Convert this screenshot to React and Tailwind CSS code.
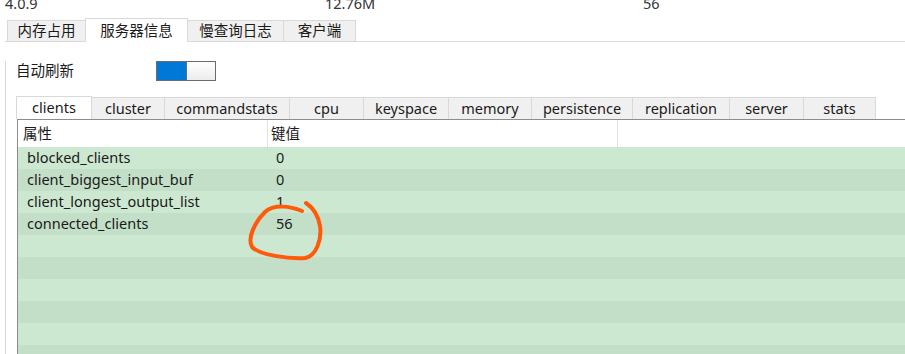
import React from 'react';

const outerTabs = [
  { label: '内存占用', w: 'w-[79px]' },
  { label: '服务器信息', w: 'w-[103px]', active: true },
  { label: '慢查询日志', w: 'w-[96px]' },
  { label: '客户端', w: 'w-[72px]' },
];

const innerTabs = [
  { label: 'clients', w: 'w-[76px]', active: true },
  { label: 'cluster', w: 'w-[73px]' },
  { label: 'commandstats', w: 'w-[125px]' },
  { label: 'cpu', w: 'w-[74px]' },
  { label: 'keyspace', w: 'w-[85px]' },
  { label: 'memory', w: 'w-[83px]' },
  { label: 'persistence', w: 'w-[101px]' },
  { label: 'replication', w: 'w-[97px]' },
  { label: 'server', w: 'w-[74px]' },
  { label: 'stats', w: 'w-[72px]' },
];

const rows = [
  ['blocked_clients', '0'],
  ['client_biggest_input_buf', '0'],
  ['client_longest_output_list', '1'],
  ['connected_clients', '56'],
  ['', ''], ['', ''], ['', ''], ['', ''], ['', ''], ['', ''],
];

export default function App() {
  return (
    <div className="relative w-[905px] h-[354px] overflow-hidden bg-white text-[14.5px] text-[#1a1a1a] font-['Noto_Sans','Noto_Sans_CJK_SC',sans-serif]">
      {/* top summary row, cut off by the window */}
      <div className="h-[18px] overflow-hidden">
        <div className="flex -mt-[7px] leading-[20px] text-[#333]">
          <span className="w-[325px] pl-[5px]">4.0.9</span>
          <span className="w-[318px]">12.76M</span>
          <span>56</span>
        </div>
      </div>

      {/* outer tabs */}
      <div className="ml-[5px] h-[24px] flex items-end pl-[2px] border-b border-[#d9d9d9]">
        {outerTabs.map((t, i) => (
          <div
            key={t.label}
            className={`${t.w} flex items-center justify-center border-t border-r border-[#d9d9d9] ${i === 0 ? 'border-l' : ''} ${t.active ? 'h-[24px] -mb-px bg-white border-l -ml-px relative' : 'h-[21px] bg-[#f0f0f0]'}`}
          >
            {t.label}
          </div>
        ))}
      </div>

      {/* panel */}
      <div className="ml-[5px] h-[312px] border-l border-[#d9d9d9] pl-[10px]">
        <div className="mt-[19px] flex items-center h-[20px]">
          <span className="w-[140px]">自动刷新</span>
          <div className="w-[60px] h-[20px] border border-[#6b6b6b] flex">
            <div className="w-[29px] bg-[#0078d7]" />
            <div className="flex-1 border-l border-[#6b6b6b] bg-gradient-to-b from-white to-[#ececec]" />
          </div>
        </div>

        {/* inner tabs */}
        <div className="mt-[15px] ml-px h-[23px] flex items-end">
          {innerTabs.map((t, i) => (
            <div
              key={t.label}
              className={`${t.w} flex items-center justify-center border-t border-r border-[#d9d9d9] ${i === 0 ? 'border-l' : ''} ${t.active ? 'h-[23px] bg-white -ml-px' : 'h-[22px] bg-[#f0f0f0]'}`}
            >
              {t.label}
            </div>
          ))}
        </div>

        {/* table */}
        <div className="ml-px border-l border-t border-[#8c8c8c]">
          <div className="h-[27px] flex items-center bg-white">
            <div className="w-[250px] h-full pl-[5px] flex items-center border-r border-[#e3e3e3]">属性</div>
            <div className="w-[350px] h-full pl-[3px] flex items-center border-r border-[#e3e3e3]">键值</div>
          </div>
          {rows.map((r, i) => (
            <div key={i} className={`h-[22px] flex items-center ${i % 2 === 0 ? 'bg-[#cde8d0]' : 'bg-[#c3dfc8]'}`}>
              <div className="w-[250px] pl-[9px]">{r[0]}</div>
              <div className="pl-[8px]">{r[1]}</div>
            </div>
          ))}
        </div>
      </div>

      {/* hand-drawn annotation */}
      <svg className="absolute left-0 top-0 pointer-events-none" width="905" height="354">
        <path
          d="M302 211 C 290 206, 274 204, 265 212 C 255 222, 247 238, 252 247 C 260 255, 288 259, 305 258 C 316 256, 322 240, 320 226 C 318 214, 312 207, 306 203"
          fill="none"
          stroke="#ff5a0a"
          strokeWidth="4"
          strokeLinecap="round"
          strokeLinejoin="round"
        />
      </svg>
    </div>
  );
}
